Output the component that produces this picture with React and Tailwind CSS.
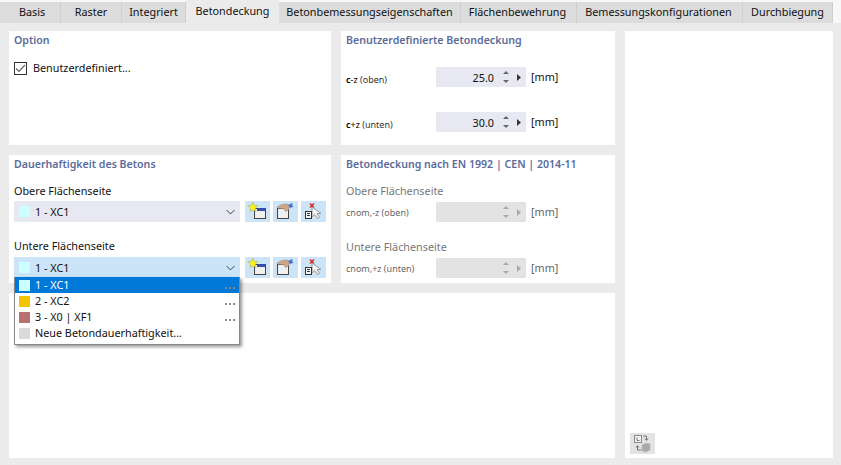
import React from "react";

const tabs = [
  { label: "Basis", w: "w-[61px]", pad: "pl-[4px]" },
  { label: "Raster", w: "w-[61px]" },
  { label: "Integriert", w: "w-[64px]" },
  { label: "Betondeckung", w: "w-[93px]", active: true },
  { label: "Betonbemessungseigenschaften", w: "w-[182px]" },
  { label: "Flächenbewehrung", w: "w-[116px]", pad: "pr-[2px]" },
  { label: "Bemessungskonfigurationen", w: "w-[166px]", pad: "pr-[2px]" },
  { label: "Durchbiegung", w: "w-[90px]" },
];

const Title = ({ children }) => (
  <div className="text-[10.6px] font-semibold leading-[14px] text-[#5a6b9a]">{children}</div>
);

const Sub = ({ main, rest }) => (
  <span className="text-[9px] leading-[12px] text-[#333]">
    <span className="font-semibold text-black">c</span>
    <span className="text-black">{main}</span> {rest}
  </span>
);

const Spinner = ({ value, disabled }) => (
  <div className={`flex h-5 w-[90px] items-center ${disabled ? "bg-[#e3e3e3]" : "bg-[#e8e8f2]"}`}>
    <span className="flex-1 pr-[8px] pt-[1px] text-right text-[#111]">{value}</span>
    <svg width="8" height="14" viewBox="0 0 8 14" className="mr-[7px]">
      <path d="M4 1 7 4H1z" fill={disabled ? "#aaa" : "#666"} />
      <path d="M4 13 1 10h6z" fill={disabled ? "#aaa" : "#666"} />
    </svg>
    <svg width="4" height="7" viewBox="0 0 4 7" className="mr-[5px]">
      <path d="M0 0 4 3.500 0 7z" fill={disabled ? "#aaa" : "#333"} />
    </svg>
  </div>
);

const Swatch = ({ color }) => <span className={`h-[11px] w-[11px] shrink-0 ${color}`} />;

const NewIcon = () => (
  <svg width="25" height="21" viewBox="0 0 25 21">
    <rect x="9.500" y="7.500" width="11" height="10" fill="#f0f0f0" stroke="#444" />
    <rect x="12" y="7" width="9" height="3" fill="#3a4ca8" />
    <path d="M8 1 9.400 4.300 13 4.700 10.400 7 11 10.500 8 8.700 5 10.500 5.600 7 3 4.700 6.600 4.300z" fill="#f7f01a" stroke="#a8a860" strokeWidth=".5" />
  </svg>
);

const EditIcon = () => (
  <svg width="25" height="21" viewBox="0 0 25 21">
    <rect x="4.500" y="7.500" width="11" height="10" fill="#f0f0f0" stroke="#444" />
    <path d="M4 6 9 3.500 14 3 17 5 15.500 9 12.500 10.500 10.500 7.500 6 7.500z" fill="#cfa68a" stroke="#9b7c68" strokeWidth=".5" />
    <path d="M15 4 19 2 20 6 17 7z" fill="#4a78c8" />
  </svg>
);

const DeleteIcon = () => (
  <svg width="25" height="21" viewBox="0 0 25 21">
    <path d="M9 2.500 13 6.500M13 2.500 9 6.500" stroke="#e01818" strokeWidth="1.300" />
    <path d="M11 6v10l2.700-2.500 2.600 4 2.200-1.200-2.500-3.800H20z" fill="#f7f7f7" stroke="#999" />
    <rect x="4.500" y="10.500" width="6" height="7" fill="#f5f5f5" stroke="#333" />
    <path d="M6 12.500h3M6 14.500h3" stroke="#333" />
  </svg>
);

const IconButtons = () => (
  <div className="flex gap-[3px]">
    {[NewIcon, EditIcon, DeleteIcon].map((Icon, i) => (
      <div key={i} className="h-[21px] w-[25px] bg-[#cce4f7]">
        <Icon />
      </div>
    ))}
  </div>
);

const Combo = ({ bg }) => (
  <div className={`flex h-[21px] w-[226px] items-center pl-[5px] pr-[5px] ${bg}`}>
    <Swatch color="bg-[#ccffff]" />
    <span className="ml-[5px] flex-1 pt-[1px] text-[#111]">1 - XC1</span>
    <svg width="9" height="6" viewBox="0 0 9 6">
      <path d="M.5 1 4.500 5 8.500 1" fill="none" stroke="#444" />
    </svg>
  </div>
);

const Dots = () => (
  <span className="absolute right-[4px] top-[10px] flex gap-[2px]">
    <span className="h-[2px] w-[2px] bg-[#888]" />
    <span className="h-[2px] w-[2px] bg-[#888]" />
    <span className="h-[2px] w-[2px] bg-[#888]" />
  </span>
);

const DropRow = ({ color, label, active, dots }) => (
  <div className={`relative flex h-4 items-center pl-[4px] ${active ? "bg-[#0078d7] text-white" : "text-[#111]"}`}>
    <Swatch color={color} />
    <span className="ml-[5px]">{label}</span>
    {dots && <Dots />}
  </div>
);

export default function App() {
  return (
    <div
      className="relative h-[465px] w-[841px] overflow-hidden bg-[#ebebeb] text-[10.8px] text-[#111]"
      style={{ fontFamily: '"Noto Sans", "Open Sans", sans-serif' }}
    >
      <div className="flex h-[23px] items-end bg-[#f7f7f7]">
        {tabs.map((t) => (
          <div
            key={t.label}
            className={`flex items-center justify-center ${t.w} ${t.pad || ""} ${
              t.active
                ? "h-[23px] bg-[#ebebeb]"
                : "h-[21px] border-r border-[#cfcfcf] bg-[#dcdcdc]"
            }`}
          >
            {t.label}
          </div>
        ))}
      </div>

      <div className="flex gap-[10px] pl-[9px] pr-[8px] pt-[8px]">
        <div className="flex w-[606px] flex-col gap-[10px]">
          <div className="flex h-[114px] gap-[10px]">
            <div className="w-[322px] bg-white px-[5px] pt-[2px]">
              <Title>Option</Title>
              <div className="mt-[13px] flex items-center gap-[6px]">
                <span className="flex h-[13px] w-[13px] items-center justify-center border border-[#333] bg-white">
                  <svg width="11" height="9" viewBox="0 0 11 9">
                    <path d="M1 4.500 4 7.500 10 1" fill="none" stroke="#666" strokeWidth="1.200" />
                  </svg>
                </span>
                <span>Benutzerdefiniert...</span>
              </div>
            </div>
            <div className="w-[274px] bg-white px-[5px] pt-[2px]">
              <Title>Benutzerdefinierte Betondeckung</Title>
              <div className="mt-[20px] flex items-center">
                <div className="w-[90px] pt-[4px]"><Sub main="-z" rest="(oben)" /></div>
                <Spinner value="25.0" />
                <span className="ml-[5px]">[mm]</span>
              </div>
              <div className="mt-[25px] flex items-center">
                <div className="w-[90px] pt-[4px]"><Sub main="+z" rest="(unten)" /></div>
                <Spinner value="30.0" />
                <span className="ml-[5px]">[mm]</span>
              </div>
            </div>
          </div>

          <div className="flex h-[128px] gap-[10px]">
            <div className="w-[322px] bg-white px-[5px] pt-[2px]">
              <Title>Dauerhaftigkeit des Betons</Title>
              <div className="mt-[12px] leading-[16px]">Obere Flächenseite</div>
              <div className="mt-[2px] flex gap-[5px]">
                <Combo bg="bg-[#e8e8f2]" />
                <IconButtons />
              </div>
              <div className="mt-[16px] leading-[16px]">Untere Flächenseite</div>
              <div className="mt-[3px] flex gap-[5px]">
                <Combo bg="bg-[#cce4f7]" />
                <IconButtons />
              </div>
            </div>
            <div className="w-[274px] bg-white px-[5px] pt-[2px]">
              <Title>Betondeckung nach EN 1992 | CEN | 2014-11</Title>
              <div className="mt-[12px] leading-[16px] text-[#777]">Obere Flächenseite</div>
              <div className="mt-[3px] flex items-center">
                <div className="w-[90px] pt-[2px] text-[9px] text-[#666]">cnom,-z (oben)</div>
                <Spinner disabled />
                <span className="ml-[5px] text-[#666]">[mm]</span>
              </div>
              <div className="mt-[17px] leading-[16px] text-[#777]">Untere Flächenseite</div>
              <div className="mt-[3px] flex items-center">
                <div className="w-[90px] pt-[2px] text-[9px] text-[#666]">cnom,+z (unten)</div>
                <Spinner disabled />
                <span className="ml-[5px] text-[#666]">[mm]</span>
              </div>
            </div>
          </div>

          <div className="h-[165px] bg-white" />
        </div>

        <div className="flex h-[427px] w-[208px] flex-col justify-end bg-white pb-[4px] pl-[5px]">
          <div className="h-[21px] w-[25px] bg-[#e3e3e3]">
            <svg width="25" height="21" viewBox="0 0 25 21">
              <rect x="4.500" y="2.500" width="7" height="7" fill="#f3f3f3" stroke="#888" />
              <path d="M7 4.500v3h2.500" fill="none" stroke="#777" />
              <path d="M13 3h3.500v4M15 5.500l1.500 2 1.500-2" fill="none" stroke="#777" />
              <path d="M11 17H7.500v-4M6 14.500l1.500-2 1.500 2" fill="none" stroke="#777" />
              <path d="M12 12l4-2 4 1v6l-4 2-4-1z" fill="#a9a9a9" stroke="#bbb" />
            </svg>
          </div>
        </div>
      </div>

      {/* open combo list */}
      <div className="absolute left-[14px] top-[277px] h-[68px] w-[226px] border border-t-0 border-[#888] bg-white shadow-[2px_2px_3px_rgba(0,0,0,0.4)]">
        <DropRow color="bg-[#ccffff]" label="1 - XC1" active dots />
        <DropRow color="bg-[#f5c400]" label="2 - XC2" dots />
        <DropRow color="bg-[#b87070]" label="3 - X0 | XF1" dots />
        <DropRow color="bg-[#d9d9d9]" label="Neue Betondauerhaftigkeit..." />
      </div>
    </div>
  );
}
